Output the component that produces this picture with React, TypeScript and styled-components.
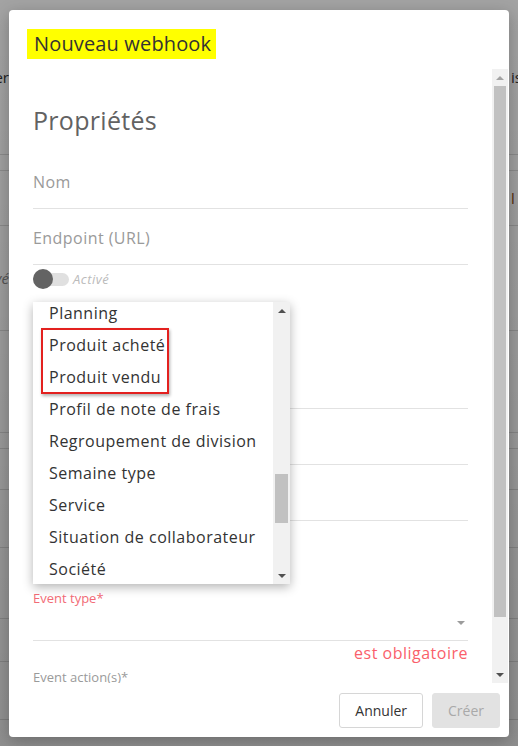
import React from 'react';
import styled, { createGlobalStyle } from 'styled-components';

const GlobalStyle = createGlobalStyle`
  html, body {
    margin: 0;
    padding: 0;
    overflow: hidden;
  }
  body {
    font-family: 'Open Sans', 'Noto Sans', sans-serif;
  }
`;

const Screen = styled.div`
  position: relative;
  width: 518px;
  height: 746px;
  overflow: hidden;
  background: #ffffff;
`;

/* page behind the dialog */
const BgTable = styled.div`
  display: flex;
  flex-direction: column;
`;

const BgRow = styled.div<{ $h: number }>`
  height: ${(p) => p.$h}px;
  box-sizing: border-box;
  border-bottom: 1px solid #dcdcdc;
  display: flex;
  align-items: center;
  justify-content: space-between;
  font-size: 15px;
  color: #333;
`;

const BgLeft = styled.div<{ $italic?: boolean; $color?: string }>`
  width: 9px;
  display: flex;
  justify-content: flex-end;
  white-space: nowrap;
  font-style: ${(p) => (p.$italic ? 'italic' : 'normal')};
  color: ${(p) => p.$color || '#333'};
`;

const BgRight = styled.div<{ $color?: string }>`
  width: 7px;
  white-space: nowrap;
  color: ${(p) => p.$color || '#333'};
`;

const Overlay = styled.div`
  position: absolute;
  inset: 0;
  background: linear-gradient(rgba(0, 0, 0, 0.36), rgba(0, 0, 0, 0.44));
`;

const Modal = styled.div`
  position: absolute;
  left: 9px;
  top: 10px;
  width: 500px;
  height: 727px;
  background: #fff;
  border-radius: 4px;
  box-shadow: 0 4px 16px rgba(0, 0, 0, 0.25);
  display: flex;
  flex-direction: column;
  overflow: hidden;
`;

const Header = styled.div`
  height: 59px;
  box-sizing: border-box;
  padding: 19px 0 10px 18px;
`;

const Title = styled.h2`
  display: inline-block;
  margin: 0;
  padding: 0 5px 0 7px;
  height: 30px;
  line-height: 30px;
  background: #ffff00;
  color: #333;
  font-size: 20px;
  font-weight: 400;
  letter-spacing: 0.15px;
`;

const Body = styled.div`
  position: relative;
  flex: 1;
  min-height: 0;
  display: flex;
  overflow: hidden;
`;

const Content = styled.div`
  flex: 1;
  padding: 36px 24px 0 24px;
  display: flex;
  flex-direction: column;

  & > * {
    flex-shrink: 0;
  }
`;

const SectionTitle = styled.h3`
  margin: 0 0 18px 0;
  height: 30px;
  line-height: 30px;
  font-size: 25px;
  font-weight: 500;
  letter-spacing: 0.3px;
  color: #626262;
`;

const Field = styled.div`
  height: 56px;
  box-sizing: border-box;
  padding: 17px 0 14px;
  line-height: 24px;
  font-size: 16px;
  letter-spacing: 0.45px;
  color: #9a9a9a;
  border-bottom: 1px solid #e2e2e2;
`;

const ToggleRow = styled.div`
  margin-top: 4px;
  height: 20px;
  display: flex;
  align-items: center;
  gap: 4px;
`;

const Toggle = styled.div`
  position: relative;
  width: 36px;
  height: 13px;
  border-radius: 7px;
  background: #e0e0e0;
`;

const Knob = styled.div`
  position: absolute;
  left: 0;
  top: -4px;
  width: 20px;
  height: 20px;
  border-radius: 50%;
  background: #636363;
`;

const ToggleLabel = styled.span`
  font-size: 13px;
  font-style: italic;
  letter-spacing: 0.5px;
  color: #bbbbbb;
`;

const Spacer = styled.div<{ $h: number }>`
  height: ${(p) => p.$h}px;
  flex-shrink: 0;
`;

const SmallLabel = styled.div<{ $error?: boolean }>`
  height: 18px;
  line-height: 18px;
  font-size: 13px;
  color: ${(p) => (p.$error ? '#f26b76' : '#9a9a9a')};
`;

const SelectRow = styled.div`
  height: 34px;
  box-sizing: border-box;
  border-bottom: 1px solid #e2e2e2;
  display: flex;
  align-items: center;
  justify-content: flex-end;
  padding: 0 3px 2px 0;
`;

const Caret = styled.span<{ $up?: boolean; $color?: string }>`
  width: 0;
  height: 0;
  border-left: 4px solid transparent;
  border-right: 4px solid transparent;
  ${(p) =>
    p.$up
      ? `border-bottom: 4px solid ${p.$color || '#505050'};`
      : `border-top: 4px solid ${p.$color || '#505050'};`}
`;

const ErrorText = styled.div`
  height: 24px;
  line-height: 24px;
  margin-bottom: 3px;
  text-align: right;
  font-size: 16px;
  letter-spacing: 0.5px;
  color: #fa5f6b;
`;

const ScrollTrack = styled.div<{ $w: number; $gap?: number }>`
  width: ${(p) => p.$w}px;
  margin-right: ${(p) => p.$gap || 0}px;
  flex-shrink: 0;
  background: #f1f1f1;
  display: flex;
  flex-direction: column;
  align-items: center;
`;

const ScrollButton = styled.div`
  height: 17px;
  width: 100%;
  flex-shrink: 0;
  display: flex;
  align-items: center;
  justify-content: center;
`;

const ScrollThumb = styled.div<{ $h: number; $w: number }>`
  width: ${(p) => p.$w}px;
  height: ${(p) => p.$h}px;
  flex-shrink: 0;
  background: #c1c1c1;
`;

const Dropdown = styled.div`
  position: absolute;
  left: 24px;
  top: 233px;
  width: 257px;
  height: 282px;
  background: #fff;
  box-shadow: 0 3px 10px rgba(0, 0, 0, 0.3);
  display: flex;
  z-index: 2;
`;

const OptionViewport = styled.div`
  position: relative;
  flex: 1;
  overflow: hidden;
`;

const OptionList = styled.ul`
  list-style: none;
  margin: -5px 0 0 0;
  padding: 0;
`;

const Option = styled.li`
  height: 32px;
  line-height: 32px;
  padding-left: 16px;
  font-size: 16px;
  letter-spacing: 0.5px;
  color: #333;
  white-space: nowrap;
`;

const Highlight = styled.div`
  position: absolute;
  left: 8px;
  top: 26px;
  width: 128px;
  height: 66px;
  box-sizing: border-box;
  border: 2px solid #e3211f;
  box-shadow: 1px 2px 3px rgba(0, 0, 0, 0.3);
  pointer-events: none;
`;

const Footer = styled.div`
  height: 54px;
  flex-shrink: 0;
  display: flex;
  align-items: center;
  justify-content: flex-end;
  gap: 9px;
  padding-right: 9px;
`;

const Button = styled.button<{ $disabled?: boolean }>`
  height: 35px;
  box-sizing: border-box;
  padding: 0 15px;
  margin-top: 1px;
  border-radius: 3px;
  font-family: 'Open Sans', sans-serif;
  font-size: 14px;
  border: 1px solid ${(p) => (p.$disabled ? '#e2e2e2' : '#d6d6d6')};
  background: ${(p) => (p.$disabled ? '#e2e2e2' : '#fff')};
  color: ${(p) => (p.$disabled ? '#a9a9a9' : '#333')};
`;

const options = [
  'Planning',
  'Produit acheté',
  'Produit vendu',
  'Profil de note de frais',
  'Regroupement de division',
  'Semaine type',
  'Service',
  'Situation de collaborateur',
  'Société',
];

const bgRows: { h: number; left?: string; right?: string; italic?: boolean; rightColor?: string }[] = [
  { h: 155, left: 'Filtrer', right: 'is' },
  { h: 16 },
  { h: 55, right: 'l', rightColor: '#8a4b10' },
  { h: 105, left: 'Arrivé', italic: true },
  { h: 102 },
  { h: 16 },
  { h: 41 },
  { h: 58 },
  { h: 71 },
  { h: 43 },
  { h: 58 },
  { h: 40 },
];

const App: React.FC = () => {
  return (
    <Screen>
      <GlobalStyle />
      <BgTable>
        {bgRows.map((r, i) => (
          <BgRow key={i} $h={r.h}>
            <BgLeft $italic={r.italic} $color={r.italic ? '#888' : undefined}>
              {r.left}
            </BgLeft>
            <BgRight $color={r.rightColor}>{r.right}</BgRight>
          </BgRow>
        ))}
      </BgTable>
      <Overlay />
      <Modal>
        <Header>
          <Title>Nouveau webhook</Title>
        </Header>
        <Body>
          <Content>
            <SectionTitle>Propriétés</SectionTitle>
            <Field>Nom</Field>
            <Field>Endpoint (URL)</Field>
            <ToggleRow>
              <Toggle>
                <Knob />
              </Toggle>
              <ToggleLabel>Activé</ToggleLabel>
            </ToggleRow>
            <Spacer $h={64} />
            <Field />
            <Field />
            <Field />
            <Spacer $h={68} />
            <SmallLabel $error>Event type*</SmallLabel>
            <SelectRow>
              <Caret $color="#9c9c9c" />
            </SelectRow>
            <ErrorText>est obligatoire</ErrorText>
            <SmallLabel>Event action(s)*</SmallLabel>
          </Content>
          <ScrollTrack $w={16} $gap={1}>
            <ScrollButton>
              <Caret $up $color="#a3a3a3" />
            </ScrollButton>
            <ScrollThumb $w={12} $h={531} />
            <Spacer $h={49} />
            <ScrollButton>
              <Caret $color="#505050" />
            </ScrollButton>
          </ScrollTrack>

          <Dropdown>
            <OptionViewport>
              <OptionList>
                {options.map((o) => (
                  <Option key={o}>{o}</Option>
                ))}
              </OptionList>
              <Highlight />
            </OptionViewport>
            <ScrollTrack $w={17}>
              <ScrollButton>
                <Caret $up />
              </ScrollButton>
              <Spacer $h={155} />
              <ScrollThumb $w={13} $h={49} />
              <Spacer $h={44} />
              <ScrollButton>
                <Caret />
              </ScrollButton>
            </ScrollTrack>
          </Dropdown>
        </Body>
        <Footer>
          <Button>Annuler</Button>
          <Button $disabled>Créer</Button>
        </Footer>
      </Modal>
    </Screen>
  );
};

export default App;
